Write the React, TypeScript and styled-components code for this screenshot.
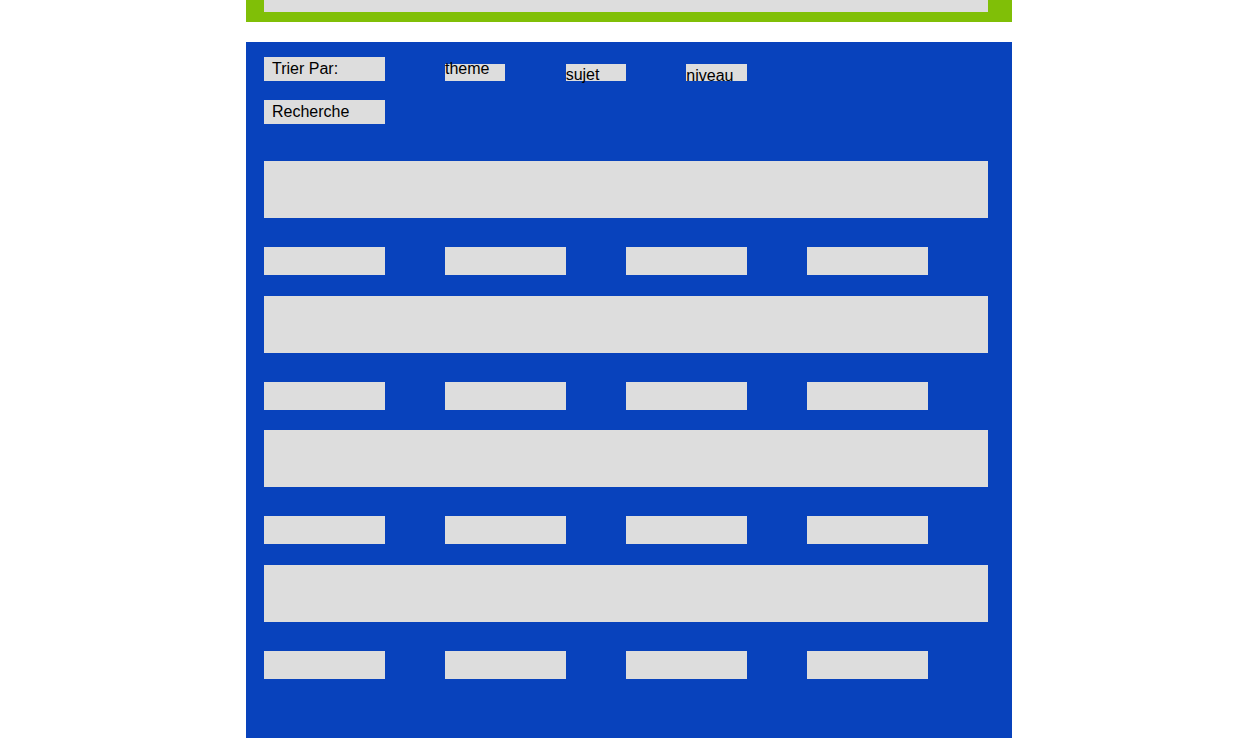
import React from "react";
import styled, { createGlobalStyle } from "styled-components";

const GlobalStyle = createGlobalStyle`
  html, body {
    margin: 0;
    padding: 0;
    background: #ffffff;
  }
  body {
    font-family: "Liberation Sans", Arial, sans-serif;
    font-size: 16px;
    color: #000000;
  }
`;

const Page = styled.div`
  width: 766px;
  margin-left: 246px;
  padding-bottom: 17px;
`;

const Header = styled.header`
  background: #80bf07;
  padding: 0 24px 10px 18px;
`;

const HeaderInner = styled.div`
  height: 12px;
  background: #dddddd;
`;

const Main = styled.main`
  margin-top: 20px;
  background: #0842bc;
  padding: 15px 24px 59px 18px;
`;

const Controls = styled.div`
  display: flex;
  align-items: flex-end;
  height: 24px;
`;

const SortLabel = styled.div`
  box-sizing: border-box;
  width: 16.667%;
  margin-right: 8.333%;
  height: 24px;
  line-height: 24px;
  padding-left: 8px;
  background: #dddddd;
  white-space: nowrap;
`;

const Filter = styled.div<{ $lh: number }>`
  width: 8.333%;
  margin-right: 8.333%;
  height: 17px;
  line-height: ${(p) => p.$lh}px;
  background: #dddddd;
  white-space: nowrap;
  overflow: visible;
`;

const SearchBox = styled.div`
  box-sizing: border-box;
  margin-top: 19px;
  width: 16.667%;
  height: 24px;
  line-height: 24px;
  padding-left: 8px;
  background: #dddddd;
`;

const List = styled.div`
  margin-top: 37px;
  display: flex;
  flex-direction: column;
  gap: 20.67px;
`;

const Card = styled.div`
  display: flex;
  flex-direction: column;
`;

const Bar = styled.div`
  height: 57px;
  background: #dddddd;
`;

const Row = styled.div`
  margin-top: 29px;
  display: grid;
  grid-template-columns: repeat(4, 1fr);
`;

const Cell = styled.div`
  width: 66.667%;
  height: 28px;
  background: #dddddd;
`;

const filters = [
  { label: "theme", lh: 9 },
  { label: "sujet", lh: 21 },
  { label: "niveau", lh: 23 },
];

export default function App() {
  return (
    <>
      <GlobalStyle />
      <Page>
        <Header>
          <HeaderInner />
        </Header>
        <Main>
          <Controls>
            <SortLabel>Trier Par:</SortLabel>
            {filters.map((f) => (
              <Filter key={f.label} $lh={f.lh}>
                {f.label}
              </Filter>
            ))}
          </Controls>
          <SearchBox>Recherche</SearchBox>
          <List>
            {[0, 1, 2, 3].map((i) => (
              <Card key={i}>
                <Bar />
                <Row>
                  {[0, 1, 2, 3].map((j) => (
                    <Cell key={j} />
                  ))}
                </Row>
              </Card>
            ))}
          </List>
        </Main>
      </Page>
    </>
  );
}
